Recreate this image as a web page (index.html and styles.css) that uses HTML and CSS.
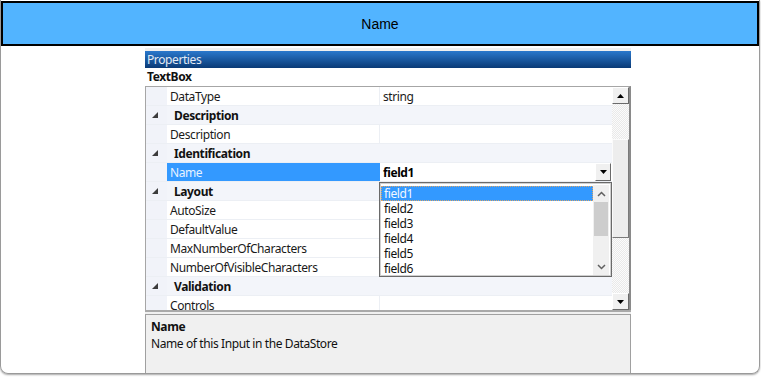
FILE: index.html
```html
<!DOCTYPE html>
<html>
<head>
<meta charset="utf-8">
<link rel="stylesheet" href="styles.css">
</head>
<body>
<div class="window">
  <div class="title">Name</div>
  <div class="props">
    <div class="props-title">Properties</div>
    <div class="obj">TextBox</div>
    <div class="grid">
      <div class="rows">
        <div class="row"><span class="m"></span><span class="n">DataType</span><span class="v">string</span></div>
        <div class="row cat"><span class="m"><svg width="6" height="6" viewBox="0 0 6 6"><polygon points="6,0 6,6 0,6" fill="#3c3c3c"/></svg></span><span class="c">Description</span></div>
        <div class="row"><span class="m"></span><span class="n">Description</span><span class="v"></span></div>
        <div class="row cat"><span class="m"><svg width="6" height="6" viewBox="0 0 6 6"><polygon points="6,0 6,6 0,6" fill="#3c3c3c"/></svg></span><span class="c">Identification</span></div>
        <div class="row sel"><span class="m"></span><span class="n">Name</span><span class="v b">field1<span class="ddbtn"><svg width="7" height="4" viewBox="0 0 7 4"><polygon points="0,0 7,0 3.5,4" fill="#000"/></svg></span></span></div>
        <div class="row cat"><span class="m"><svg width="6" height="6" viewBox="0 0 6 6"><polygon points="6,0 6,6 0,6" fill="#3c3c3c"/></svg></span><span class="c">Layout</span></div>
        <div class="row"><span class="m"></span><span class="n">AutoSize</span><span class="v"></span></div>
        <div class="row"><span class="m"></span><span class="n">DefaultValue</span><span class="v"></span></div>
        <div class="row"><span class="m"></span><span class="n">MaxNumberOfCharacters</span><span class="v"></span></div>
        <div class="row"><span class="m"></span><span class="n">NumberOfVisibleCharacters</span><span class="v"></span></div>
        <div class="row cat"><span class="m"><svg width="6" height="6" viewBox="0 0 6 6"><polygon points="6,0 6,6 0,6" fill="#3c3c3c"/></svg></span><span class="c">Validation</span></div>
        <div class="row"><span class="m"></span><span class="n">Controls</span><span class="v"></span></div>
      </div>
      <div class="vscroll">
        <div class="sbtn"><svg width="7" height="4" viewBox="0 0 7 4"><polygon points="3.5,0 7,4 0,4" fill="#000"/></svg></div>
        <div class="track t1"></div>
        <div class="thumb"></div>
        <div class="track t2"></div>
        <div class="sbtn"><svg width="7" height="4" viewBox="0 0 7 4"><polygon points="0,0 7,0 3.5,4" fill="#000"/></svg></div>
      </div>
      <div class="dropdown">
        <div class="items">
          <div class="item hi">field1</div>
          <div class="item">field2</div>
          <div class="item">field3</div>
          <div class="item">field4</div>
          <div class="item">field5</div>
          <div class="item">field6</div>
        </div>
        <div class="lscroll">
          <div class="lbtn"><svg width="9" height="6" viewBox="0 0 9 6"><polyline points="1,5 4.5,1.5 8,5" fill="none" stroke="#606060" stroke-width="1.5"/></svg></div>
          <div class="lthumb"></div>
          <div class="lspace"></div>
          <div class="lbtn"><svg width="9" height="6" viewBox="0 0 9 6"><polyline points="1,1 4.5,4.5 8,1" fill="none" stroke="#606060" stroke-width="1.5"/></svg></div>
        </div>
      </div>
    </div>
    <div class="splitter"></div>
    <div class="desc">
      <div class="desc-title">Name</div>
      <div class="desc-text">Name of this Input in the DataStore</div>
    </div>
  </div>
</div>
</body>
</html>
```
FILE: styles.css
```css
* { box-sizing: border-box; }
html, body { margin: 0; padding: 0; background: #fff; }
body { width: 761px; height: 378px; overflow: hidden; }

.window {
  width: 760px;
  height: 374px;
  border: 1px solid #9a9a9a;
  border-top: none;
  border-radius: 0 0 8px 8px;
  box-shadow: 0 1px 2px rgba(0,0,0,0.35);
  overflow: hidden;
  position: relative;
}

.title {
  margin: 1px 0 0 0;
  height: 45px;
  border: 2px solid #000;
  background: #52b4ff;
  display: flex;
  align-items: center;
  justify-content: center;
  font-family: "Liberation Sans", Arial, sans-serif;
  font-size: 14px;
  color: #000;
}

.props {
  margin: 2px 0 0 144px;
  width: 486px;
  border-top: 3px solid #efefef;
  font-family: "Noto Sans", sans-serif;
  font-size: 12px;
  letter-spacing: -0.4px;
  color: #1a1a1a;
}

.props-title {
  height: 17px;
  line-height: 18px;
  padding-left: 2px;
  color: #e2eaf5;
  background: linear-gradient(#2a78cc, #0a3a76);
}

.obj {
  height: 18px;
  line-height: 18px;
  padding-left: 2px;
  font-weight: bold;
  color: #111;
}

.grid {
  position: relative;
  display: flex;
  height: 224px;
  border-top: 1px solid #a6a6a6;
  border-left: 1px solid #a6a6a6;
  border-right: 2px solid #8a8a8a;
  overflow: hidden;
}

.rows {
  width: 466px;
  display: flex;
  flex-direction: column;
}

.row {
  height: 19px;
  flex: none;
  display: flex;
  border-bottom: 1px solid #eceff4;
  line-height: 20px;
}
.row .m {
  width: 21px;
  flex: none;
  background: #f1f3f9;
  display: flex;
  align-items: center;
  justify-content: center;
  padding-right: 4px;
}
.row .n {
  width: 213px;
  flex: none;
  padding-left: 3px;
  border-right: 1px solid #eceff4;
  white-space: nowrap;
}
.row .v {
  flex: 1;
  padding-left: 3px;
  position: relative;
}
.row .v.b { font-weight: bold; color: #000; }
.row.cat { background: #f3f5fa; }
.row.cat .c { padding-left: 7px; font-weight: bold; color: #111; }
.row.sel .n { background: #3399ff; color: #e6f2ff; border-right-color: #3399ff; }

.ddbtn {
  position: absolute;
  right: 1px;
  top: 0;
  width: 16px;
  height: 18px;
  background: #f0f0f0;
  border: 1px solid;
  border-color: #fff #6a6a6a #6a6a6a #fff;
  display: flex;
  align-items: center;
  justify-content: center;
}

.vscroll {
  width: 17px;
  display: flex;
  flex-direction: column;
}
.sbtn {
  height: 17px;
  flex: none;
  background: #f0f0f0;
  border: 1px solid;
  border-color: #fff #6a6a6a #6a6a6a #fff;
  display: flex;
  align-items: center;
  justify-content: center;
}
.track {
  background: repeating-conic-gradient(#e9e9e9 0 25%, #fbfbfb 0 50%) 0 0 / 2px 2px;
}
.t1 { height: 35px; flex: none; }
.t2 { flex: 1; }
.thumb {
  height: 99px;
  flex: none;
  background: #ededed;
  border: 1px solid;
  border-color: #fbfbfb #7a7a7a #7a7a7a #fbfbfb;
}

.dropdown {
  position: absolute;
  left: 233px;
  top: 95px;
  width: 233px;
  height: 95px;
  background: #fff;
  border: 1px solid #6a6a6a;
  box-shadow: inset 0 0 0 1px #cfcfcf;
  padding: 2px 2px 1px 1px;
  display: flex;
  color: #111;
}
.items {
  flex: 1;
  padding-top: 1px;
}
.item {
  height: 15px;
  line-height: 15px;
  padding-left: 3px;
}
.item.hi {
  background: #3399ff;
  color: #f2f8ff;
  outline: 1px dotted #d9a66a;
  outline-offset: -1px;
}
.lscroll {
  width: 16px;
  background: #f0f0f0;
  display: flex;
  flex-direction: column;
}
.lbtn {
  height: 17px;
  flex: none;
  display: flex;
  align-items: center;
  justify-content: center;
}
.lthumb {
  height: 34px;
  flex: none;
  margin: 0 1px;
  background: #cdcdcd;
}
.lspace { flex: 1; }

.splitter {
  height: 4px;
  border-top: 2px solid #a9a9a9;
  background: #f0f0f0;
}

.desc {
  height: 62px;
  background: #f0f0f0;
  border: 1px solid #a0a0a0;
  padding: 3px 0 0 5px;
  color: #111;
}
.desc-title { font-weight: bold; line-height: 17px; }
.desc-text { line-height: 18px; }
```
